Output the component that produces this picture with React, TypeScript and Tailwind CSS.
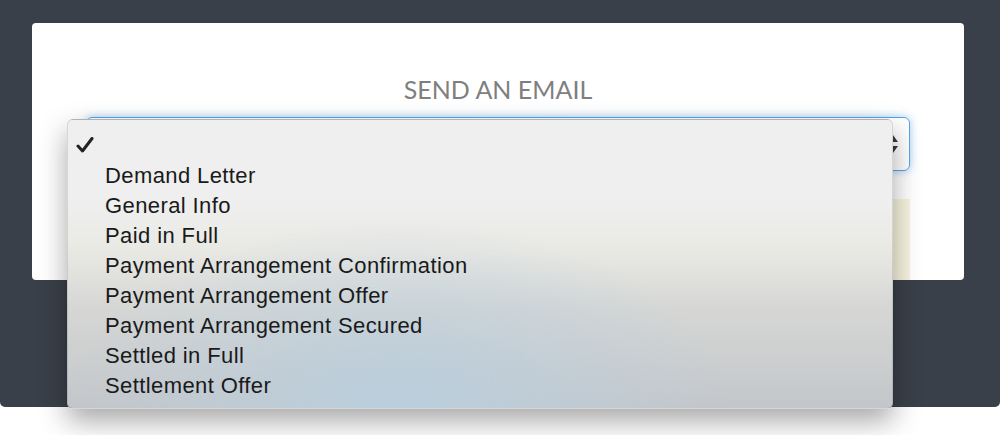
import React from 'react';

const templates = [
  'Demand Letter',
  'General Info',
  'Paid in Full',
  'Payment Arrangement Confirmation',
  'Payment Arrangement Offer',
  'Payment Arrangement Secured',
  'Settled in Full',
  'Settlement Offer',
];

const SelectArrows: React.FC = () => (
  <svg width="10" height="18" viewBox="0 0 10 18" className="text-[#3a3a3a]">
    <path d="M5 0 L10 7 L0 7 Z" fill="currentColor" />
    <path d="M0 11 L10 11 L5 18 Z" fill="currentColor" />
  </svg>
);

const Check: React.FC = () => (
  <svg width="18" height="16" viewBox="0 0 18 16">
    <path
      d="M2 9 L6.5 14 L16 1.5"
      fill="none"
      stroke="#222"
      strokeWidth="3"
      strokeLinecap="round"
      strokeLinejoin="round"
    />
  </svg>
);

const App: React.FC = () => {
  return (
    <div className="relative w-[1000px] h-[435px] bg-white overflow-hidden">
      <div className="h-[407px] bg-[#3a4049] rounded-b-[5px] pt-[23px] pl-[32px] pr-[36px]">
        <div className="h-[257px] bg-white rounded-[4px] overflow-hidden px-[54px] pt-[51px]">
          <h2 className="text-center text-[25px] leading-[30px] text-[#7f7f7f] font-['Lato',sans-serif]">
            SEND AN EMAIL
          </h2>
          <div className="mt-[13px] h-[54px] rounded-[6px] border border-[#5aa3e6] shadow-[0_0_8px_rgba(102,175,233,0.6)] flex items-center justify-end pr-[11px]">
            <SelectArrows />
          </div>
          <div className="mt-[28px] h-[100px] bg-[#f8f4e0]" />
        </div>
      </div>

      <div className="absolute left-[67px] top-[119px] w-[826px] h-[290px] rounded-[6px] border border-black/10 shadow-[0_12px_28px_rgba(0,0,0,0.35)] bg-[radial-gradient(ellipse_40%_65%_at_40%_100%,rgba(186,207,222,0.95),rgba(186,207,222,0)_100%),linear-gradient(to_bottom,#efefef_0%,#efefef_28%,#e9e9e4_45%,#d6d7d5_65%,#c3c6ca_100%)] pt-[10px] font-['Liberation_Sans',Arial,sans-serif] text-[22px] tracking-[0.4px] text-[#1a1a1a]">
        <div className="h-[30px] flex items-center pl-[8px]">
          <Check />
        </div>
        {templates.map((t) => (
          <div key={t} className="h-[30px] flex items-center pl-[37px]">
            {t}
          </div>
        ))}
      </div>
    </div>
  );
};

export default App;
